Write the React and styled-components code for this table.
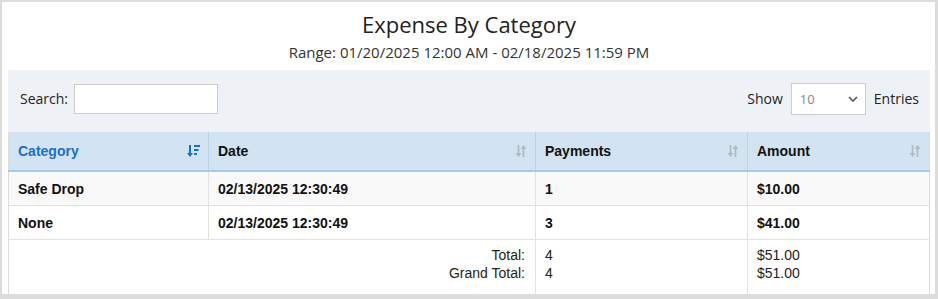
import styled, { createGlobalStyle } from 'styled-components'

const GlobalStyle = createGlobalStyle`
  html, body {
    margin: 0;
    padding: 0;
    background: #dcdcdc;
  }
`

const Page = styled.div`
  margin: 2px 3px 0 2px;
  height: 292px;
  background: #fff;
  padding: 0 5px 0 6px;
  box-sizing: border-box;
  font-family: "Open Sans", "Liberation Sans", sans-serif;
  color: #333;
`

const Title = styled.h1`
  margin: 0;
  padding-top: 7px;
  text-align: center;
  font-size: 22px;
  font-weight: 400;
  line-height: 30px;
  color: #222;
`

const Range = styled.div`
  text-align: center;
  font-size: 15px;
  line-height: 20px;
  margin-top: 3px;
  color: #333;
`

const Toolbar = styled.div`
  margin-top: 8px;
  height: 62px;
  box-sizing: border-box;
  background: #eef2f6;
  display: flex;
  align-items: center;
  justify-content: space-between;
  padding: 0 11px 5px 12px;
  font-size: 14px;
  color: #222;
`

const Field = styled.label`
  display: flex;
  align-items: center;
  gap: 6px;
`

const SearchInput = styled.input`
  width: 144px;
  height: 30px;
  box-sizing: border-box;
  border: 1px solid #ccc;
  background: #fff;
  margin: 0;
`

const SelectBox = styled.div`
  width: 75px;
  height: 32px;
  box-sizing: border-box;
  border: 1px solid #ccc;
  background: #fff;
  display: flex;
  align-items: center;
  justify-content: space-between;
  padding: 0 7px 0 8px;
  font-size: 13px;
  color: #888;
  margin: 0 2px;
`

const Table = styled.table`
  width: 100%;
  table-layout: fixed;
  border-collapse: collapse;
  font-family: "Liberation Sans", Arial, sans-serif;
  font-size: 14px;
  color: #111;
  border: 1px solid #ddd;
  border-top: none;
`

const Th = styled.th`
  height: 38px;
  padding: 0 8px 0 9px;
  text-align: left;
  background: #d2e4f1;
  border-bottom: 2px solid #a8cbe4;
  border-left: 1px solid #b9d4e8;
  color: ${p => (p.$active ? '#1a6fc9' : '#111')};
  font-weight: 700;
  &:first-child {
    border-left: none;
  }
`

const HeadInner = styled.div`
  display: flex;
  align-items: center;
  justify-content: space-between;
`

const Row = styled.tr`
  background: ${p => (p.$odd ? '#f9f9f9' : '#fff')};
`

const Td = styled.td`
  height: 33px;
  padding: 0 9px;
  font-weight: 700;
  border-top: 1px solid #e2e2e2;
  border-left: 1px solid #e2e2e2;
  &:first-child {
    border-left: none;
  }
`

const FootCell = styled.td`
  height: 53px;
  padding: 0 10px 0 9px;
  border-top: 1px solid #e2e2e2;
  border-left: 1px solid #e2e2e2;
  text-align: ${p => (p.$right ? 'right' : 'left')};
  vertical-align: top;
  padding-top: 6px;
  line-height: 18px;
  color: #222;
  &:first-child {
    border-left: none;
  }
`

const SortDesc = () => (
  <svg width="13" height="14" viewBox="0 0 13 14">
    <path d="M3 1v10" stroke="#1a6fc9" strokeWidth="2" />
    <path d="M0 9l3 4 3-4z" fill="#1a6fc9" />
    <rect x="7" y="1" width="6" height="2" fill="#1a6fc9" />
    <rect x="7" y="5" width="4.5" height="2" fill="#1a6fc9" />
    <rect x="7" y="9" width="3" height="2" fill="#1a6fc9" />
  </svg>
)

const SortBoth = () => (
  <svg width="12" height="14" viewBox="0 0 12 14">
    <path d="M3.5 1v10" stroke="#b0b9c0" strokeWidth="1.6" />
    <path d="M0.5 9l3 4 3-4z" fill="#b0b9c0" />
    <path d="M8.5 3v10" stroke="#b0b9c0" strokeWidth="1.6" />
    <path d="M5.5 5l3-4 3 4z" fill="#b0b9c0" />
  </svg>
)

const Chevron = () => (
  <svg width="10" height="6" viewBox="0 0 10 6">
    <path d="M1 1l4 4 4-4" stroke="#555" strokeWidth="1.6" fill="none" />
  </svg>
)

const columns = [
  { title: 'Category', width: 200, active: true },
  { title: 'Date', width: 327 },
  { title: 'Payments', width: 212 },
  { title: 'Amount' },
]

const rows = [
  { category: 'Safe Drop', date: '02/13/2025 12:30:49', payments: 1, amount: '$10.00' },
  { category: 'None', date: '02/13/2025 12:30:49', payments: 3, amount: '$41.00' },
]

const App = () => {
  return (
    <Page>
      <GlobalStyle />
      <Title>Expense By Category</Title>
      <Range>Range: 01/20/2025 12:00 AM - 02/18/2025 11:59 PM</Range>
      <Toolbar>
        <Field>
          Search: <SearchInput />
        </Field>
        <Field>
          Show
          <SelectBox>
            10 <Chevron />
          </SelectBox>
          Entries
        </Field>
      </Toolbar>
      <Table>
        <colgroup>
          {columns.map(c => (
            <col key={c.title} style={c.width ? { width: c.width } : undefined} />
          ))}
        </colgroup>
        <thead>
          <tr>
            {columns.map(c => (
              <Th key={c.title} $active={c.active}>
                <HeadInner>
                  {c.title}
                  {c.active ? <SortDesc /> : <SortBoth />}
                </HeadInner>
              </Th>
            ))}
          </tr>
        </thead>
        <tbody>
          {rows.map((r, i) => (
            <Row key={r.category} $odd={i % 2 === 0}>
              <Td>{r.category}</Td>
              <Td>{r.date}</Td>
              <Td>{r.payments}</Td>
              <Td>{r.amount}</Td>
            </Row>
          ))}
          <tr>
            <FootCell colSpan={2} $right>
              Total:<br />Grand Total:
            </FootCell>
            <FootCell>4<br />4</FootCell>
            <FootCell>$51.00<br />$51.00</FootCell>
          </tr>
        </tbody>
      </Table>
    </Page>
  )
}

export default App
